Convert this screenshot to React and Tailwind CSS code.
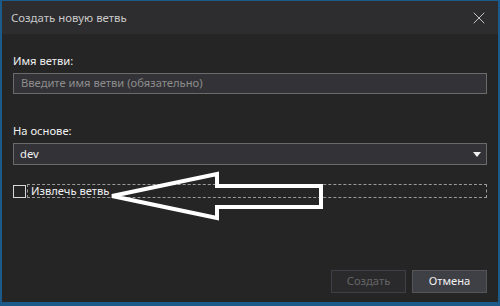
import { X } from "lucide-react";

export default function App() {
  return (
    <div
      className="relative w-[500px] h-[306px] flex flex-col bg-[#252526] border-x-2 border-t border-b-[4px] border-[#1c5a8a] text-[11.2px] text-[#f1f1f1]"
      style={{ fontFamily: '"Noto Sans", "Open Sans", sans-serif' }}
    >
      {/* Title bar */}
      <div className="h-[33px] bg-[#2d2d30] flex items-center justify-between pl-[9px] pr-[9px]">
        <span className="text-[11.4px] text-[#c8c8c8]">Создать новую ветвь</span>
        <X size={20} strokeWidth={1.1} className="text-[#d0d0d0]" />
      </div>

      {/* Body */}
      <div className="flex-1 flex flex-col px-[11px]">
        <label className="mt-[19px] leading-[16px]">Имя ветви:</label>
        <div className="mt-[4px] h-[21px] border border-[#6a6a6a] bg-[#333337] flex items-center px-[7px] text-[#8c8c8c]">
          Введите имя ветви (обязательно)
        </div>

        <label className="mt-[29px] leading-[16px]">На основе:</label>
        <div className="mt-[4px] h-[22px] border border-[#6a6a6a] bg-[#333337] flex items-center justify-between pl-[6px] pr-[5px]">
          <span>dev</span>
          <span className="w-0 h-0 border-x-[4px] border-x-transparent border-t-[5px] border-t-[#f1f1f1]" />
        </div>

        <div className="mt-[19px] h-[14px] flex items-center">
          <span className="w-[13px] h-[13px] border border-[#d8d8d8] shrink-0" />
          <span className="ml-[1px] flex-1 h-[14px] border border-dashed border-[#9a9a9a] flex items-center pl-[3px] leading-[12px]">
            Извлечь ветвь
          </span>
        </div>

        <div className="mt-auto mb-[9px] flex justify-end gap-[6px]">
          <button className="w-[75px] h-[23px] bg-[#2a2a2c] border border-[#3f3f46] text-[#656565]">
            Создать
          </button>
          <button className="w-[75px] h-[23px] bg-[#3f3f46] border border-[#555558] text-[#f1f1f1]">
            Отмена
          </button>
        </div>
      </div>

      {/* Annotation arrow */}
      <svg
        className="absolute left-0 top-0 pointer-events-none"
        width="500"
        height="306"
        viewBox="0 0 500 306"
      >
        <polygon
          points="110,195 215,173 215,185 319,185 319,206 215,206 215,217"
          fill="none"
          stroke="#ffffff"
          strokeWidth="4"
          strokeLinejoin="miter"
        />
      </svg>
    </div>
  );
}
